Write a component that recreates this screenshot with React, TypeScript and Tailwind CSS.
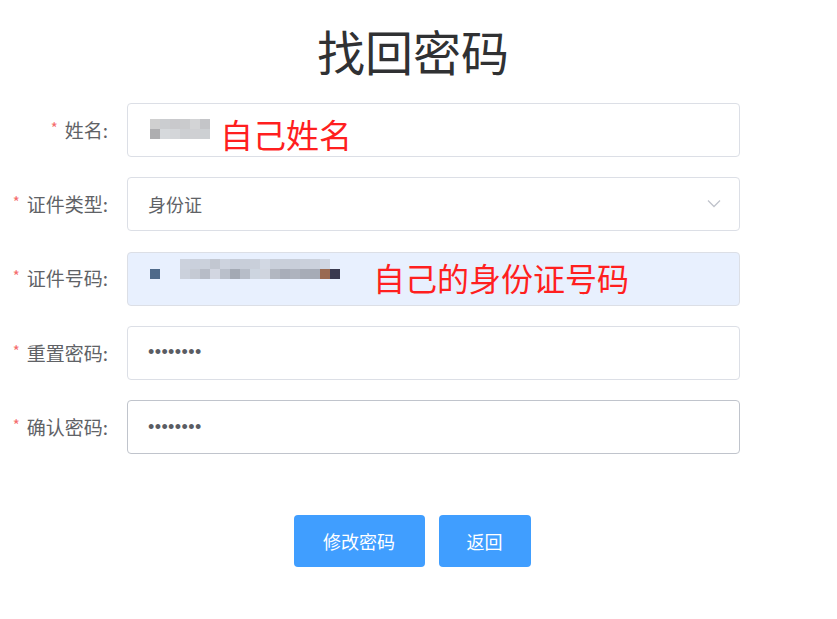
import React from 'react';

const font = { fontFamily: '"Noto Sans CJK SC", "Liberation Sans", sans-serif' };

const nameBlur = [
  ['#d0d0d0', '#cbcdd0', '#c9c9cc', '#cacbcd', '#d3d4d6', '#c4c5c8'],
  ['#aeaeb0', '#d6d9dc', '#d4d6d9', '#cdcfd2', '#cfd0d3', '#cdd0d3'],
];

const idBlur = [
  ['#ccd2dd', '#cad0dc', '#cbd1dc', '#c2c7d1', '#cdd3de', '#c7cdd9', '#c8ced9', '#c9cfda', '#d2d8e3', '#c9cfda', '#c9cfda', '#c8ced9', '#cad0db', '#cbd1dc', '#d0d6e1'],
  ['#cbd1dc', '#c5cad4', '#b7bcc7', '#d2d6e1', '#bac0cb', '#a3a9b4', '#b7bdc8', '#cdd5e0', '#d0d5df', '#b2b7c1', '#a8adb9', '#aeb3be', '#a7acb7', '#a6abb6', '#996a52', '#3a3a4f'],
];

const Pixels = ({ rows }: { rows: string[][] }) => (
  <div className="flex flex-col">
    {rows.map((r, i) => (
      <div key={i} className="flex">
        {r.map((c, j) => (
          <div key={j} className="w-[10px] h-[10px]" style={{ backgroundColor: c }} />
        ))}
      </div>
    ))}
  </div>
);

const Field = ({ label, children, className = '' }: { label: string; children?: React.ReactNode; className?: string }) => (
  <div className="flex items-center">
    <label className="w-[127px] pr-[19px] flex justify-end items-center text-[19px] text-[#606266]">
      <span className="text-[15px] text-[#f56c6c] mr-[7px] -mt-[4px]">*</span>
      {label}:
    </label>
    <div className={`relative w-[613px] h-[54px] rounded-[4px] border flex items-center pl-[20px] ${className}`}>
      {children}
    </div>
  </div>
);

const Dots = () => (
  <span className="text-[18px] text-[#5a5c63] tracking-[0.4px]" style={{ fontFamily: '"Liberation Sans", sans-serif' }}>
    ••••••••
  </span>
);

export default function App() {
  return (
    <div className="min-h-screen bg-white w-[837px]" style={font}>
      <h1 className="pt-[19px] h-[84px] pr-[11px] text-center text-[48px] leading-[62px] text-[#303133]">找回密码</h1>
      <div className="mt-[19px] flex flex-col gap-[20.3px]">
        <Field label="姓名" className="border-[#dcdfe6] bg-white">
          <div className="ml-[2px] -mt-[3px]">
            <Pixels rows={nameBlur} />
          </div>
          <span className="absolute left-[92px] top-[10px] text-[33px] leading-[40px] text-[#ff1f1f]">自己姓名</span>
        </Field>
        <Field label="证件类型" className="border-[#dcdfe6] bg-white">
          <span className="text-[18px] text-[#606266]">身份证</span>
          <svg className="absolute right-[18px] top-[21px]" width="14" height="9" viewBox="0 0 14 9" fill="none">
            <path d="M1 1.5 L7 7.5 L13 1.5" stroke="#c0c4cc" strokeWidth="1.3" />
          </svg>
        </Field>
        <Field label="证件号码" className="border-[#dcdfe6] bg-[#e8f0fe]">
          <div className="ml-[2px] w-[10px] h-[10px] bg-[#4f6a8a] -mt-[10px]" />
          <div className="ml-[20px] -mt-[20px]">
            <Pixels rows={idBlur} />
          </div>
          <span className="absolute left-[245px] top-[4px] text-[32px] leading-[40px] text-[#ff1f1f]">自己的身份证号码</span>
        </Field>
        <Field label="重置密码" className="border-[#dcdfe6] bg-white">
          <Dots />
        </Field>
        <Field label="确认密码" className="border-[#c0c4cc] bg-white">
          <Dots />
        </Field>
      </div>
      <div className="mt-[61px] flex justify-center gap-[14px] pr-[13px]">
        <button className="w-[131px] h-[52px] rounded-[4px] bg-[#409eff] text-white text-[18px]">修改密码</button>
        <button className="w-[92px] h-[52px] rounded-[4px] bg-[#409eff] text-white text-[18px]">返回</button>
      </div>
    </div>
  );
}
